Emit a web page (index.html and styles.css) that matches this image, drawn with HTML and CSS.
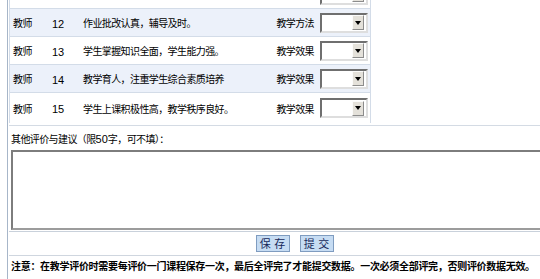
FILE: index.html
```html
<!DOCTYPE html>
<html lang="zh-CN">
<head>
    <meta charset="UTF-8">
    <title>教学评价</title>
    <link rel="stylesheet" href="styles.css">
</head>
<body>
    <div class="frame">
        <div class="items">
            <!-- row 11 is scrolled out of view, only its select edge shows -->
            <div class="row cut">
                <span></span><span></span><span></span><span></span><span class="pick"><span class="sel"><span class="sel-btn"></span></span></span>
            </div>
            <div class="row alt">
                <span class="who">教师</span><span class="no">12</span><span class="item">作业批改认真，辅导及时。</span><span class="kind">教学方法</span><span class="pick"><span class="sel"><span class="sel-btn"></span></span></span>
            </div>
            <div class="row">
                <span class="who">教师</span><span class="no">13</span><span class="item">学生掌握知识全面，学生能力强。</span><span class="kind">教学效果</span><span class="pick"><span class="sel"><span class="sel-btn"></span></span></span>
            </div>
            <div class="row alt">
                <span class="who">教师</span><span class="no">14</span><span class="item">教学育人，注重学生综合素质培养</span><span class="kind">教学效果</span><span class="pick"><span class="sel"><span class="sel-btn"></span></span></span>
            </div>
            <div class="row">
                <span class="who">教师</span><span class="no">15</span><span class="item">学生上课积极性高，教学秩序良好。</span><span class="kind">教学效果</span><span class="pick"><span class="sel"><span class="sel-btn"></span></span></span>
            </div>
        </div>

        <div class="remark">
            <div class="remark-label">其他评价与建议（限<span class="num">50</span>字，可不填）：</div>
            <textarea class="remark-box"></textarea>
        </div>

        <div class="actions">
            <button class="btn">保 存</button>
            <button class="btn">提 交</button>
        </div>

        <div class="note">注意：在教学评价时需要每评价一门课程保存一次，最后全评完了才能提交数据。一次必须全部评完，否则评价数据无效。</div>
    </div>
</body>
</html>
```

FILE: styles.css
```css
:root{
    --frame-line: #a7b6c9;
    --row-line: #d3dce8;
    --row-alt: #ecf1fa;
    --btn-bg: #c6dcf3;
    --btn-line: #7f9cc0;
}
html, body {
    margin: 0;
    overflow: hidden;
    background: #fff;
}
body {
    font-family: "Liberation Sans", "Noto Sans CJK SC", sans-serif;
    font-size: 10px;
    color: #000;
}

.frame {
    width: 571px;
    margin-left: 7px;
    padding-left: 1px;
    border-left: 1px solid var(--frame-line);
    border-bottom: 1px solid #a9bfd9;
}

/* evaluation rows */
.items {
    width: 362px;
    margin-top: -19px;
    padding-bottom: 2px;
}
.row {
    display: grid;
    grid-template-columns: 30px 36px 1fr auto 52px;
    align-items: center;
    height: 28px;
    box-sizing: border-box;
    border-left: 1px solid var(--row-line);
    border-right: 1px solid var(--row-line);
    border-bottom: 1px solid var(--row-line);
    letter-spacing: -0.6px;
}
.row:last-child {
    height: 30px;
    border-bottom: none;
}
.row.alt {
    background: var(--row-alt);
}
.who {
    padding-left: 3px;
}
.no {
    text-align: center;
    letter-spacing: 0;
    font-size: 11px;
    padding-top: 2px;
}
.item {
    padding-left: 7px;
    white-space: nowrap;
}
.kind {
    padding-right: 4px;
    text-align: right;
}
.pick {
    padding-left: 2px;
}

.sel {
    display: flex;
    align-items: center;
    justify-content: flex-end;
    width: 48px;
    height: 20px;
    box-sizing: border-box;
    padding-right: 2px;
    background: #fff;
    border: 2px solid;
    border-color: #6f6f6f #dedede #dedede #6f6f6f;
}
.sel-btn {
    display: flex;
    align-items: center;
    justify-content: center;
    width: 10px;
    height: 13px;
    background: #e4e1da;
    border: 1px solid;
    border-color: #fbfbfb #8c8c8c #8c8c8c #fbfbfb;
}
.sel-btn::after {
    content: "";
    border-left: 3px solid transparent;
    border-right: 3px solid transparent;
    border-top: 4px solid #000;
}

/* remark */
.remark {
    border-top: 1px solid #d4dbe4;
    border-bottom: 1px solid #c9d1db;
    padding: 3px 0 1px 2px;
}
.remark-label {
    line-height: 20px;
    letter-spacing: -0.6px;
}
.num {
    letter-spacing: 0;
    font-size: 11px;
}
.remark-box {
    display: block;
    width: 100%;
    height: 80px;
    box-sizing: border-box;
    margin: 0;
    resize: none;
    border: 2px solid;
    border-color: #7d7d7d #e2e2e2 #9c9c9c #7d7d7d;
    background: #fff;
}

.actions {
    display: flex;
    justify-content: center;
    gap: 10px;
    padding: 3px 0;
    border-bottom: 1px solid #cfd6df;
}
.btn {
    width: 34px;
    height: 17px;
    padding: 0;
    background: var(--btn-bg);
    border: 1px solid var(--btn-line);
    color: #16295a;
    font-family: "Noto Sans CJK SC", sans-serif;
    font-size: 11px;
    line-height: 15px;
    word-spacing: 1px;
}

.note {
    padding: 0 0 2px 2px;
    line-height: 21px;
    font-weight: bold;
    font-size: 10px;
    letter-spacing: -0.3px;
    white-space: nowrap;
}
```
